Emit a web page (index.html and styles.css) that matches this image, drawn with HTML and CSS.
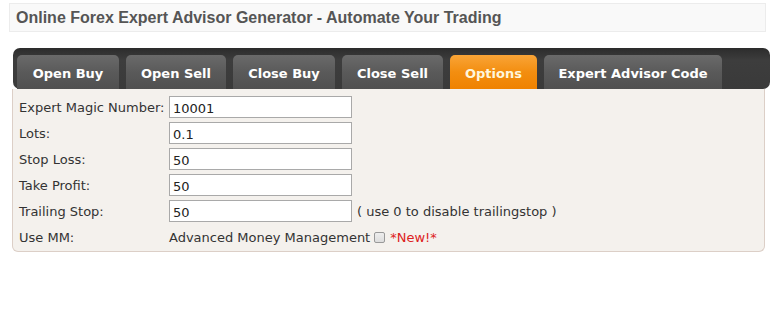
FILE: index.html
```html
<!DOCTYPE html>
<html>
<head>
<meta charset="utf-8">
<link rel="stylesheet" href="styles.css">
</head>
<body>
<div class="page">
  <div class="titlebox"><h1 class="title">Online Forex Expert Advisor Generator - Automate Your Trading</h1></div>
  <div class="tabs">
    <div class="tabbar">
      <div class="tab">Open Buy</div>
      <div class="tab">Open Sell</div>
      <div class="tab">Close Buy</div>
      <div class="tab">Close Sell</div>
      <div class="tab active">Options</div>
      <div class="tab">Expert Advisor Code</div>
    </div>
    <div class="panel">
      <div class="row"><span class="label">Expert Magic Number:</span><input class="field" type="text" value="10001"></div>
      <div class="row"><span class="label">Lots:</span><input class="field" type="text" value="0.1"></div>
      <div class="row"><span class="label">Stop Loss:</span><input class="field" type="text" value="50"></div>
      <div class="row"><span class="label">Take Profit:</span><input class="field" type="text" value="50"></div>
      <div class="row"><span class="label">Trailing Stop:</span><input class="field" type="text" value="50"><span class="hint">( use 0 to disable trailingstop )</span></div>
      <div class="row mm"><span class="label">Use MM:</span><span class="mmtext">Advanced Money Management</span><span class="check"></span><span class="new">*New!*</span></div>
    </div>
  </div>
</div>
</body>
</html>
```
FILE: styles.css
```css
html, body { margin: 0; padding: 0; background: #fff; }
body { font-family: "DejaVu Sans", Verdana, sans-serif; font-size: 13px; color: #333; }
.page { padding: 3px 12px 0 9px; width: 757px; box-sizing: content-box; }
.titlebox {
  width: 757px; height: 29px; box-sizing: border-box;
  background: #f9f9f9; border: 1px solid #ececec;
  display: flex; align-items: center; padding-left: 6px;
}
.title { margin: 0; font-family: "Liberation Sans", Arial, sans-serif; font-weight: bold; font-size: 16px; color: #555; }
.tabs { margin: 16px 0 0 4px; width: 757px; }
.tabbar {
  height: 41px; box-sizing: border-box;
  background: linear-gradient(#2c2c2c, #3d3d3d 30%, #3a3a3a);
  border-radius: 7px;
  display: flex; align-items: flex-end; gap: 7px; padding: 0 4px;
}
.tab {
  height: 34px; box-sizing: border-box;
  background: linear-gradient(#6a6a6a, #5a5a5a 50%, #505050);
  border-radius: 5px 5px 0 0;
  color: #fff; font-weight: bold; font-size: 13px;
  display: flex; align-items: center; justify-content: center;
  padding-top: 3px;
}
.tab:nth-child(1) { width: 102px; }
.tab:nth-child(2) { width: 100px; }
.tab:nth-child(3) { width: 102px; }
.tab:nth-child(4) { width: 101px; }
.tab:nth-child(5) { width: 87px; }
.tab:nth-child(6) { width: 178px; }
.tab.active { background: linear-gradient(#f9a437, #f38e10 50%, #ef8200); color: #fff6dc; }
.panel {
  width: 753px; box-sizing: border-box; margin-left: -1px;
  background: #f4f1ed; border: 1px solid #dccfc7; border-top: none;
  border-radius: 0 0 6px 6px;
  padding: 5px 0 1px 6px;
}
.row { display: flex; align-items: center; height: 26px; }
.label { width: 150px; }
.field {
  width: 183px; height: 22px; box-sizing: border-box; margin: 0;
  border: 1px solid #a9a9a9; background: #fff;
  font-family: "DejaVu Sans", Verdana, sans-serif; font-size: 13px; color: #222;
  padding: 2px 3px 0;
}
.hint { margin-left: 5px; }
.check {
  width: 11px; height: 11px; box-sizing: border-box; margin: 0 5px 0 4px;
  border: 1px solid #999; background: linear-gradient(#eee, #ddd); border-radius: 2px;
}
.new { color: #d22; }
```
